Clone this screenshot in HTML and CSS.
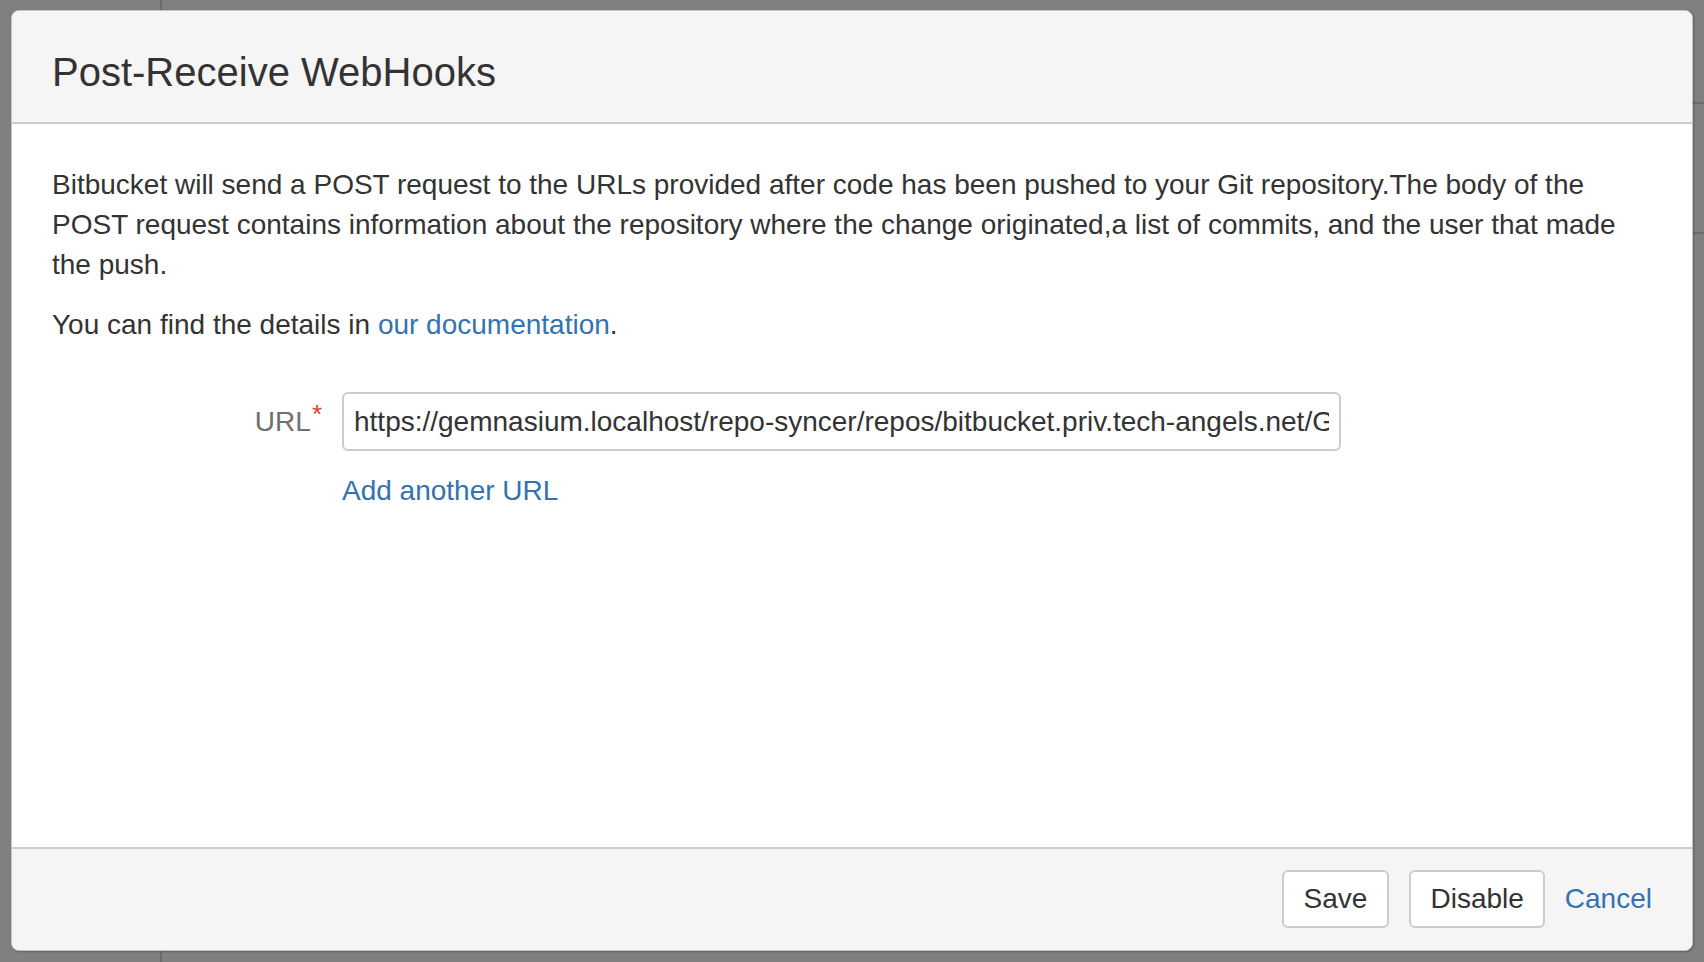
FILE: index.html
```html
<!DOCTYPE html>
<html lang="en">
<head>
<meta charset="utf-8">
<title>Post-Receive WebHooks</title>
<link rel="stylesheet" href="styles.css">
</head>
<body>
<div class="backdrop">
  <div class="page-line page-line-v"></div>
  <div class="page-line page-line-h1"></div>
  <div class="page-line page-line-h2"></div>
  <section class="dialog">
    <header class="dialog-header">
      <h2 class="dialog-title">Post-Receive WebHooks</h2>
    </header>
    <div class="dialog-content">
      <p class="intro">Bitbucket will send a POST request to the URLs provided after code has been pushed to your Git repository.The body of the POST request contains information about the repository where the change originated,a list of commits, and the user that made the push.</p>
      <p class="intro">You can find the details in <a class="link" href="#">our documentation</a>.</p>
      <div class="field-group">
        <label class="field-label" for="url">URL<span class="req">*</span></label>
        <div class="field-main">
          <input class="text-input" id="url" type="text" value="https://gemnasium.localhost/repo-syncer/repos/bitbucket.priv.tech-angels.net/GEM/test">
          <a class="link add-url" href="#">Add another URL</a>
        </div>
      </div>
    </div>
    <footer class="dialog-footer">
      <button class="btn btn-save" type="button">Save</button>
      <button class="btn" type="button">Disable</button>
      <a class="link cancel" href="#">Cancel</a>
    </footer>
  </section>
</div>
</body>
</html>
```

FILE: styles.css
```css
html, body {
  margin: 0;
  padding: 0;
}

body {
  font-family: "Liberation Sans", Arial, Helvetica, sans-serif;
  color: #333333;
}

.backdrop {
  position: relative;
  width: 1704px;
  height: 962px;
  box-sizing: border-box;
  padding: 10px 11px 11px 11px;
  background: #808080;
  display: flex;
  overflow: hidden;
}

.page-line {
  position: absolute;
  background: #6c6c6c;
}

.page-line-v {
  left: 160px;
  top: 0;
  width: 2px;
  height: 962px;
}

.page-line-h1,
.page-line-h2 {
  left: 1692px;
  width: 12px;
  height: 2px;
}

.page-line-h1 { top: 102px; }
.page-line-h2 { top: 232px; }

.dialog {
  position: relative;
  flex: 1;
  display: flex;
  flex-direction: column;
  background: #ffffff;
  border: 1px solid #c4c4c4;
  border-radius: 8px;
  overflow: hidden;
  box-shadow: 1px 1px 2px rgba(0, 0, 0, 0.25);
}

.dialog-header {
  background: #f5f5f5;
  height: 113px;
  box-sizing: border-box;
  padding: 37px 40px 0 40px;
  border-bottom: 2px solid #cccccc;
}

.dialog-title {
  margin: 0;
  font-size: 40px;
  line-height: 48px;
  font-weight: normal;
  color: #333333;
}

.dialog-content {
  flex: 1;
  padding: 41px 40px 0 40px;
}

.intro {
  margin: 0 0 20px 0;
  font-size: 28px;
  line-height: 40px;
}

.link {
  color: #3572b0;
  text-decoration: none;
}

.field-group {
  display: flex;
  align-items: flex-start;
  gap: 20px;
  margin-top: 47px;
}

.field-label {
  width: 270px;
  flex: none;
  display: flex;
  justify-content: flex-end;
  align-items: flex-start;
  padding-top: 10px;
  font-size: 28px;
  line-height: 40px;
  color: #707070;
}

.req {
  color: #d04437;
  font-size: 26px;
  line-height: 24px;
  margin-left: 1px;
}

.field-main {
  display: flex;
  flex-direction: column;
  align-items: flex-start;
}

.text-input {
  width: 999px;
  height: 59px;
  box-sizing: border-box;
  padding: 0 10px 0 10px;
  border: 2px solid #cccccc;
  border-radius: 6px;
  background: #ffffff;
  font-family: "Liberation Sans", Arial, Helvetica, sans-serif;
  font-size: 28px;
  color: #333333;
  outline: none;
}

.add-url {
  margin-top: 20px;
  font-size: 28px;
  line-height: 40px;
}

.dialog-footer {
  background: #f5f5f5;
  border-top: 2px solid #cccccc;
  height: 103px;
  box-sizing: border-box;
  padding: 21px 40px 0 0;
  display: flex;
  justify-content: flex-end;
  align-items: flex-start;
}

.btn {
  height: 58px;
  box-sizing: border-box;
  padding: 0 19px;
  margin-right: 20px;
  border: 2px solid #cccccc;
  border-radius: 6px;
  background: #ffffff;
  font-family: "Liberation Sans", Arial, Helvetica, sans-serif;
  font-size: 28px;
  color: #333333;
}

.btn-save {
  padding: 0 20px;
}

.cancel {
  font-size: 28px;
  line-height: 58px;
}
```
